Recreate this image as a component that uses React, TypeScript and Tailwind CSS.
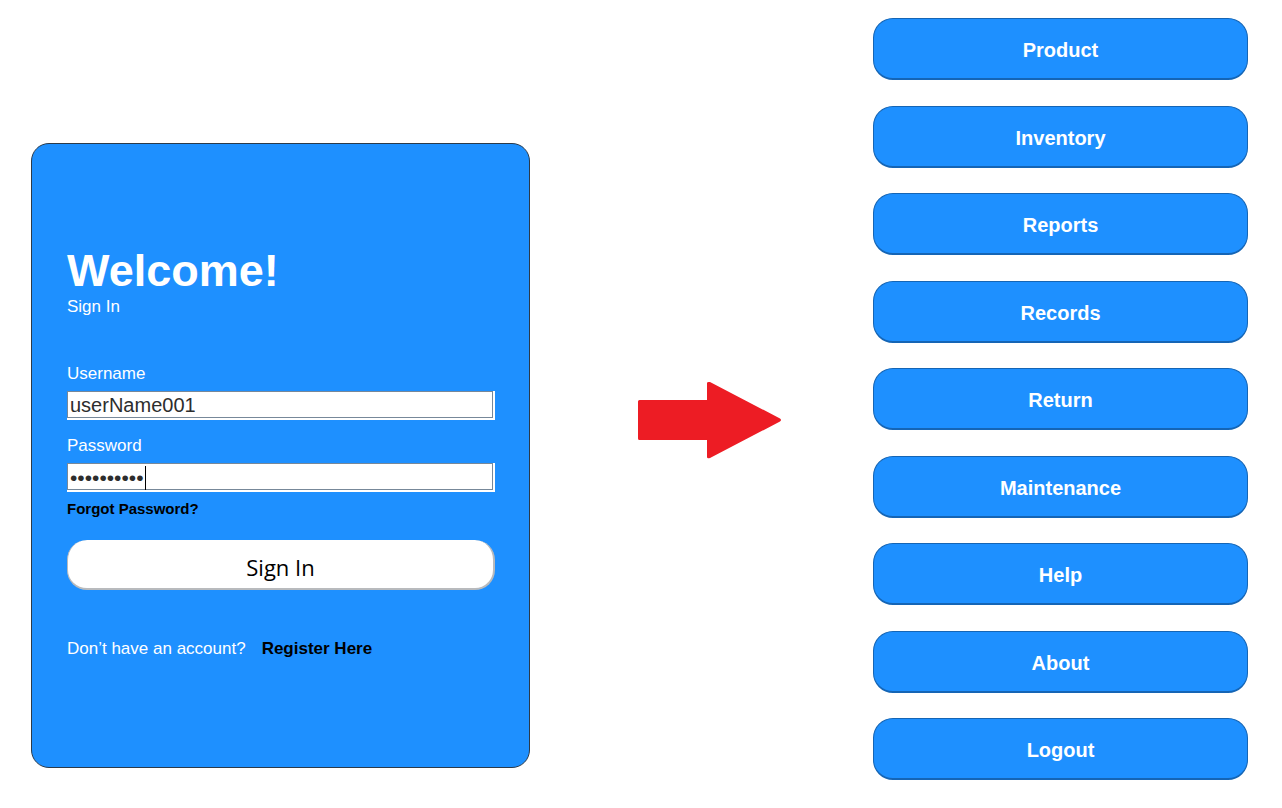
import { useState } from "react";

const menuItems = [
  "Product",
  "Inventory",
  "Reports",
  "Records",
  "Return",
  "Maintenance",
  "Help",
  "About",
  "Logout",
];

function SignInCard() {
  const [username, setUsername] = useState("userName001");
  const [password, setPassword] = useState("secret0001");

  return (
    <section className="mt-[125px] mb-3 rounded-[18px] border border-[#2b3a4a] bg-[#1e90ff] pt-[103px] pr-[34px] pl-[35px] text-[17px] leading-6 text-white">
      <h1 className="text-[45px] leading-[48px] font-bold">Welcome!</h1>
      <p>Sign In</p>
      <form className="mt-[43px]" onSubmit={(event) => event.preventDefault()}>
        <label htmlFor="username" className="block">
          Username
        </label>
        <div className="mt-[5px] bg-white pr-[2px] pb-[2px]">
          <input
            id="username"
            type="text"
            value={username}
            onChange={(event) => setUsername(event.target.value)}
            className="block h-[27px] w-full border border-[#778899] bg-white px-[2px] pt-[2px] text-[20px] text-[#2d2d2d] outline-none"
          />
        </div>
        <label htmlFor="password" className="mt-[14px] block">
          Password
        </label>
        <div className="relative mt-[5px] bg-white pr-[2px] pb-[2px]">
          <input
            id="password"
            type="password"
            value={password}
            onChange={(event) => setPassword(event.target.value)}
            className="block h-[27px] w-full border border-[#778899] bg-white px-[2px] pt-[2px] text-[21px] text-[#2d2d2d] outline-none"
          />
          <span className="absolute top-[3px] left-[78px] h-6 w-px bg-black" />
        </div>
        <a href="#forgot" className="mt-[5px] block text-[15px] font-bold text-black">
          Forgot Password?
        </a>
        <button
          type="submit"
          className="mt-[19px] block h-[50px] w-full rounded-[20px] border-r-2 border-b-2 border-l border-[#b8babd] bg-white pt-[5px] font-['Open_Sans','Noto_Sans',sans-serif] text-[22px] text-black"
        >
          Sign In
        </button>
      </form>
      <p className="mt-[47px]">
        Don’t have an account?
        <a href="#register" className="ml-4 font-bold text-black">
          Register Here
        </a>
      </p>
    </section>
  );
}

function FlowArrow() {
  return (
    <div className="flex items-center justify-center pt-[42px] pl-4">
      <svg width="144" height="78" viewBox="0 0 144 78" fill="#ed1c24" aria-hidden="true">
        <path d="M1.5 19H69V2Q69 0.5 72 1L142 37.5Q144 39 142 40.5L72 77Q69 78 69 76V59H1.5Q0 59 0 57.5V20.5Q0 19 1.5 19Z" />
      </svg>
    </div>
  );
}

export default function App() {
  return (
    <main className="grid min-h-screen grid-cols-[499fr_343fr_375fr] bg-white pt-[18px] pr-[34px] pb-7 pl-[31px] font-['Liberation_Sans',Arial,sans-serif]">
      <SignInCard />
      <FlowArrow />
      <nav className="flex flex-col justify-between">
        {menuItems.map((item) => (
          <button
            key={item}
            type="button"
            className="h-[62px] w-full rounded-[20px] border border-b-2 border-[#1565b5] bg-[#1e90ff] pt-[3px] text-[20px] font-bold text-white"
          >
            {item}
          </button>
        ))}
      </nav>
    </main>
  );
}
